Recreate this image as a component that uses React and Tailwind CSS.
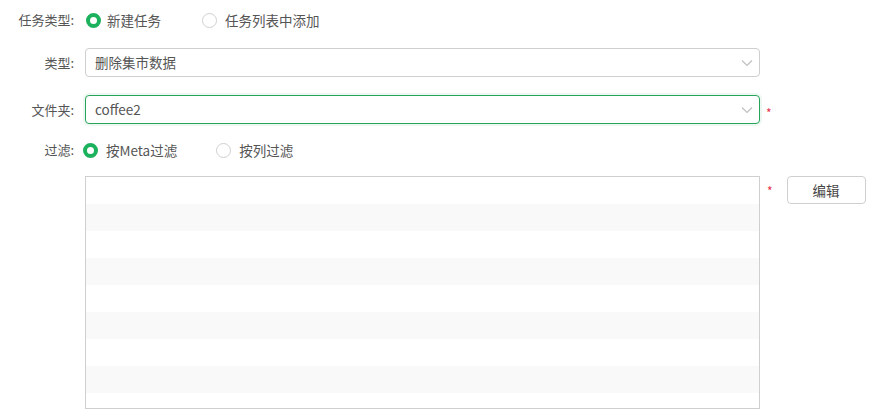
import React from 'react'

const font = { fontFamily: '"Noto Sans CJK SC", "Noto Sans", sans-serif' }

function Radio({ checked, label, gap = 'gap-[7px]' }) {
    return (
        <label className={`flex items-center ${gap} text-[13.5px] text-[#555]`}>
            {checked ? (
                <span className="w-[15px] h-[15px] rounded-full border-[4px] border-[#1cb15c] bg-white"></span>
            ) : (
                <span className="w-[15px] h-[15px] rounded-full border border-[#d0d0d0] bg-white"></span>
            )}
            {label}
        </label>
    )
}

function Chevron() {
    return (
        <svg width="12" height="8" viewBox="0 0 12 8" fill="none" stroke="#c0c0c0" strokeWidth="1.2">
            <path d="M1 1.5 L6 6.5 L11 1.5" />
        </svg>
    )
}

function Select({ value, active }) {
    return (
        <div className={`w-[675px] h-[29px] rounded-[4px] border flex items-center justify-between pl-[9px] pr-[6px] text-[13.5px] text-[#555] bg-white ${active ? 'border-[#27a35a] shadow-[0_0_0_2px_rgba(39,163,90,0.08)]' : 'border-[#cfcfcf]'}`}>
            <span>{value}</span>
            <Chevron />
        </div>
    )
}

function Label({ children }) {
    return <div className="w-[76px] text-right pr-[2px] text-[13px] text-[#555] shrink-0">{children}</div>
}

export default function App() {
    const rows = Array.from({ length: 9 })
    return (
        <div className="w-[892px] h-[414px] bg-white overflow-hidden" style={font}>
            <div className="flex items-center h-[20px] mt-[10px]">
                <Label>任务类型:</Label>
                <div className="flex items-center ml-[10px]">
                    <Radio checked label="新建任务" gap="gap-[6px]" />
                    <div className="ml-[41px]"><Radio label="任务列表中添加" gap="gap-[8px]" /></div>
                </div>
            </div>

            <div className="flex items-center mt-[18px]">
                <Label>类型:</Label>
                <div className="ml-[9px]"><Select value="删除集市数据" /></div>
            </div>

            <div className="flex items-center mt-[18px]">
                <Label>文件夹:</Label>
                <div className="ml-[9px]"><Select value="coffee2" active /></div>
                <span className="ml-[6px] text-[#e8324a] text-[12px] leading-none mt-[6px]">*</span>
            </div>

            <div className="flex items-center h-[20px] mt-[16px]">
                <Label>过滤:</Label>
                <div className="flex items-center ml-[7px]">
                    <Radio checked label="按Meta过滤" gap="gap-[8px]" />
                    <div className="ml-[39px]"><Radio label="按列过滤" gap="gap-[8px]" /></div>
                </div>
            </div>

            <div className="flex items-start mt-[16px]">
                <div className="w-[85px] shrink-0"></div>
                <div className="w-[675px] h-[233px] border border-[#cfcfcf] overflow-hidden">
                    {rows.map((_, i) => (
                        <div key={i} className={`h-[27px] ${i % 2 === 1 ? 'bg-[#f9f9f9]' : 'bg-white'}`}></div>
                    ))}
                </div>
                <span className="ml-[7px] mt-[9px] text-[#e8324a] text-[12px] leading-none">*</span>
                <button className="ml-[14px] w-[79px] h-[28px] rounded-[4px] border border-[#cfcfcf] bg-white text-[13.5px] text-[#444]">编辑</button>
            </div>
        </div>
    )
}
